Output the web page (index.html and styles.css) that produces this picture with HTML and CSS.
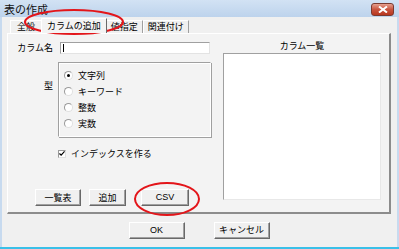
FILE: index.html
```html
<!DOCTYPE html>
<html lang="ja">
<head>
    <meta charset="UTF-8">
    <title>表の作成</title>
    <link rel="stylesheet" href="styles.css">
</head>
<body>
    <div id="window">
        <div class="title-bar">
            <span class="title">表の作成</span>
            <div class="close-btn">
                <svg width="10" height="7" viewBox="0 0 10 7"><path d="M1 0.5 L9 6.5 M9 0.5 L1 6.5" stroke="#fff" stroke-width="2"/></svg>
            </div>
        </div>

        <div class="client">
            <div class="tabs">
                <div class="tab first">全般</div>
                <div class="tab selected">カラムの追加</div>
                <div class="tab">値指定</div>
                <div class="tab">関連付け</div>
            </div>

            <div class="panel">
                <div class="form-col">
                    <div class="row name-row">
                        <span class="label">カラム名</span>
                        <div class="text-input"><span class="caret"></span></div>
                    </div>
                    <div class="row type-row">
                        <span class="label type-label">型</span>
                        <div class="group-box">
                            <div class="radio-row"><span class="radio checked"></span>文字列</div>
                            <div class="radio-row"><span class="radio"></span>キーワード</div>
                            <div class="radio-row"><span class="radio"></span>整数</div>
                            <div class="radio-row"><span class="radio"></span>実数</div>
                        </div>
                    </div>
                    <div class="check-row">
                        <span class="checkbox">
                            <svg width="7" height="7" viewBox="0 0 7 7"><path d="M0.5 3.5 L2.5 5.5 L6.5 1" fill="none" stroke="#000" stroke-width="1.4"/></svg>
                        </span>
                        インデックスを作る
                    </div>
                    <div class="panel-buttons">
                        <button class="btn btn-list">一覧表</button>
                        <button class="btn btn-add">追加</button>
                        <button class="btn btn-csv">CSV</button>
                    </div>
                </div>
                <div class="list-col">
                    <div class="list-label">カラム一覧</div>
                    <div class="list-box"></div>
                </div>
            </div>

            <div class="dialog-buttons">
                <button class="btn btn-dialog">OK</button>
                <button class="btn btn-dialog">キャンセル</button>
            </div>
        </div>

        <!-- red annotation marks -->
        <svg class="marks" width="399" height="249">
            <ellipse cx="74" cy="22" rx="49" ry="12" fill="none" stroke="#e3151a" stroke-width="2"/>
            <ellipse cx="167" cy="199" rx="32" ry="16" fill="none" stroke="#e3151a" stroke-width="2"/>
        </svg>
    </div>
</body>
</html>
```

FILE: styles.css
```css
body {
    margin: 0;
    font-family: "Noto Sans CJK JP", "Liberation Sans", sans-serif;
    font-size: 9px;
    color: #000;
}
#window {
    position: relative;
    width: 399px;
    height: 249px;
    display: flex;
    flex-direction: column;
    background-color: #c7daef;
    box-sizing: border-box;
    border-bottom: 2px solid #3ac0e8;
    overflow: hidden;
}
.title-bar {
    height: 17px;
    display: flex;
    align-items: center;
    justify-content: space-between;
    padding: 0 5px 0 4px;
    background: linear-gradient(#d2e2f4, #bdd3ec);
}
.title {
    font-size: 11px;
    line-height: 12px;
    color: #111;
}
.close-btn {
    width: 21px;
    height: 11px;
    margin-top: 1px;
    border: 1px solid #7a3a30;
    border-radius: 3px;
    background: linear-gradient(#e6a08f, #c9543e 50%, #b8371f);
    display: flex;
    align-items: center;
    justify-content: center;
}
.client {
    flex: 1;
    margin: 0 2px;
    background-color: #f0f0f0;
    display: flex;
    flex-direction: column;
    padding: 0 6px 0 5px;
}
.tabs {
    display: flex;
    align-items: flex-end;
    height: 16px;
    padding-left: 3px;
}
.tab {
    height: 12px;
    line-height: 12px;
    padding: 0 4px;
    border: 1px solid #a0a0a0;
    border-bottom: none;
    border-left-color: #fff;
    border-top-color: #fff;
    background-color: #f0f0f0;
}
.tab.first {
    padding: 0 6px;
}
.tab.selected {
    height: 14px;
    line-height: 14px;
    padding: 0 5px;
    margin: 0 -1px;
    position: relative;
    z-index: 1;
    background-color: #f3f3f3;
    border-right-color: #696969;
}
.panel {
    height: 181px;
    box-sizing: border-box;
    display: grid;
    grid-template-columns: 203px 158px;
    column-gap: 12px;
    padding: 0 6px 0 0;
    background-color: #f3f3f3;
    border: 1px solid #fff;
    border-right: 2px solid #8c8c8c;
    border-bottom: 2px solid #8c8c8c;
}
.form-col {
    display: flex;
    flex-direction: column;
    padding: 8px 0 6px 0;
}
.row {
    display: flex;
}
.label {
    width: 45px;
    text-align: right;
    line-height: 12px;
}
.name-row {
    gap: 7px;
}
.text-input {
    width: 150px;
    height: 12px;
    box-sizing: border-box;
    background-color: #fff;
    border: 1px solid #e3e3e3;
    border-top-color: #a0a0a0;
    border-left-color: #a0a0a0;
    padding: 1px 2px;
}
.caret {
    display: block;
    width: 1px;
    height: 8px;
    background-color: #000;
}
.type-row {
    gap: 5px;
    margin-top: 8px;
}
.type-label {
    margin-top: 18px;
}
.group-box {
    width: 153px;
    height: 75px;
    box-sizing: border-box;
    border: 1px solid #a0a0a0;
    border-right-color: #fff;
    border-bottom-color: #fff;
    box-shadow: 1px 1px 0 #a0a0a0, inset 1px 1px 0 #fff;
    padding: 4px 0 0 5px;
}
.radio-row {
    height: 16px;
    display: flex;
    align-items: center;
    gap: 5px;
}
.radio {
    width: 7px;
    height: 7px;
    border-radius: 50%;
    border: 1px solid #9a9a9a;
    border-right-color: #e0e0e0;
    border-bottom-color: #e0e0e0;
    background-color: #fff;
    position: relative;
}
.radio.checked::after {
    content: "";
    position: absolute;
    left: 2px;
    top: 2px;
    width: 3px;
    height: 3px;
    border-radius: 50%;
    background-color: #000;
}
.check-row {
    display: flex;
    align-items: center;
    gap: 5px;
    margin: 11px 0 0 50px;
    line-height: 11px;
}
.checkbox {
    width: 8px;
    height: 8px;
    box-sizing: border-box;
    background-color: #fff;
    border: 1px solid #9a9a9a;
    border-right-color: #e0e0e0;
    border-bottom-color: #e0e0e0;
    display: flex;
    align-items: center;
    justify-content: center;
}
.panel-buttons {
    margin-top: auto;
    display: flex;
    padding-left: 27px;
}
.btn {
    height: 17px;
    box-sizing: border-box;
    padding: 0;
    font-family: inherit;
    font-size: 9px;
    line-height: 13px;
    color: #000;
    background-color: #f0f0f0;
    border: 1px solid;
    border-color: #fff #696969 #696969 #fff;
    box-shadow: inset -1px -1px 0 #a0a0a0;
}
.btn-list {
    width: 46px;
}
.btn-add {
    width: 37px;
    margin-left: 8px;
}
.btn-csv {
    width: 48px;
    margin-left: 15px;
    font-family: "Liberation Sans", sans-serif;
}
.list-col {
    display: flex;
    flex-direction: column;
    padding-top: 6px;
}
.list-label {
    text-align: center;
    line-height: 12px;
    height: 13px;
}
.list-box {
    height: 147px;
    box-sizing: border-box;
    background-color: #fff;
    border: 1px solid #e8e8e8;
    border-top-color: #a0a0a0;
    border-left-color: #a0a0a0;
}
.dialog-buttons {
    display: flex;
    justify-content: center;
    gap: 29px;
    margin-top: 8px;
}
.btn-dialog {
    width: 56px;
    font-family: "Liberation Sans", "Noto Sans CJK JP", sans-serif;
}
.marks {
    position: absolute;
    left: 0;
    top: 0;
    pointer-events: none;
}
```
